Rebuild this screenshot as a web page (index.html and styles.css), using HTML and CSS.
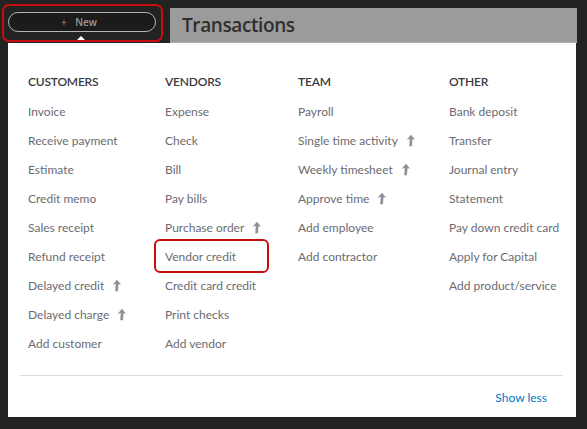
FILE: index.html
```html
<!DOCTYPE html>
<html lang="en">
<head>
    <meta charset="UTF-8">
    <meta name="viewport" content="width=device-width, initial-scale=1.0">
    <title>Transactions</title>
    <link rel="stylesheet" href="styles.css">
</head>
<body>
    <div class="topbar">
        <div class="new-wrap">
            <button class="new-btn"><span class="plus">+</span> New</button>
            <span class="caret"></span>
        </div>
        <div class="page-title">Transactions</div>
    </div>
    <div class="panel">
        <div class="columns">
            <ul class="col">
                <li class="col-title">CUSTOMERS</li>
                <li>Invoice</li>
                <li>Receive payment</li>
                <li>Estimate</li>
                <li>Credit memo</li>
                <li>Sales receipt</li>
                <li>Refund receipt</li>
                <li>Delayed credit <svg class="up" viewBox="0 0 10 14"><path d="M5.5 0.5 L10 6 L7.2 5.6 L6.6 13.5 L3.6 13.5 L4.2 5.4 L0.8 6.2 Z"/></svg></li>
                <li>Delayed charge <svg class="up" viewBox="0 0 10 14"><path d="M5.5 0.5 L10 6 L7.2 5.6 L6.6 13.5 L3.6 13.5 L4.2 5.4 L0.8 6.2 Z"/></svg></li>
                <li>Add customer</li>
            </ul>
            <ul class="col">
                <li class="col-title">VENDORS</li>
                <li>Expense</li>
                <li>Check</li>
                <li>Bill</li>
                <li>Pay bills</li>
                <li>Purchase order <svg class="up" viewBox="0 0 10 14"><path d="M5.5 0.5 L10 6 L7.2 5.6 L6.6 13.5 L3.6 13.5 L4.2 5.4 L0.8 6.2 Z"/></svg></li>
                <li class="marked">Vendor credit</li>
                <li>Credit card credit</li>
                <li>Print checks</li>
                <li>Add vendor</li>
            </ul>
            <ul class="col">
                <li class="col-title">TEAM</li>
                <li>Payroll</li>
                <li>Single time activity <svg class="up" viewBox="0 0 10 14"><path d="M5.5 0.5 L10 6 L7.2 5.6 L6.6 13.5 L3.6 13.5 L4.2 5.4 L0.8 6.2 Z"/></svg></li>
                <li>Weekly timesheet <svg class="up" viewBox="0 0 10 14"><path d="M5.5 0.5 L10 6 L7.2 5.6 L6.6 13.5 L3.6 13.5 L4.2 5.4 L0.8 6.2 Z"/></svg></li>
                <li>Approve time <svg class="up" viewBox="0 0 10 14"><path d="M5.5 0.5 L10 6 L7.2 5.6 L6.6 13.5 L3.6 13.5 L4.2 5.4 L0.8 6.2 Z"/></svg></li>
                <li>Add employee</li>
                <li>Add contractor</li>
            </ul>
            <ul class="col">
                <li class="col-title">OTHER</li>
                <li>Bank deposit</li>
                <li>Transfer</li>
                <li>Journal entry</li>
                <li>Statement</li>
                <li>Pay down credit card</li>
                <li>Apply for Capital</li>
                <li>Add product/service</li>
            </ul>
        </div>
        <div class="panel-footer">
            <a href="#" class="show-less">Show less</a>
        </div>
    </div>
</body>
</html>
```

FILE: styles.css
```css
body {
    margin: 0;
    background-color: #232323;
    font-family: Lato, "Open Sans", sans-serif;
    height: 429px;
    overflow: hidden;
}
.topbar {
    display: flex;
    align-items: flex-start;
    height: 43px;
}
.new-wrap {
    position: relative;
    box-sizing: border-box;
    width: 161px;
    height: 38px;
    margin: 4px 0 0 2px;
    padding: 6px 0 0 4px;
    border: 2px solid #c80f0f;
    border-radius: 7px;
}
.new-btn {
    display: block;
    box-sizing: border-box;
    width: 148px;
    height: 20px;
    padding: 0 6px 0 0;
    background-color: #1b1b1b;
    border: 1.5px solid #b5b5b5;
    border-radius: 10px;
    color: #9a9a9a;
    font-family: "Open Sans", sans-serif;
    font-size: 10px;
    font-weight: 600;
    line-height: 16px;
}
.new-btn .plus {
    font-weight: 400;
    margin-right: 6px;
}
.caret {
    position: absolute;
    left: 73px;
    bottom: 0;
    width: 0;
    height: 0;
    border-left: 4px solid transparent;
    border-right: 4px solid transparent;
    border-bottom: 4px solid #fff;
}
.page-title {
    flex: 1;
    box-sizing: border-box;
    height: 35px;
    margin: 8px 10px 0 7px;
    padding-left: 12px;
    background-color: #9b9b9b;
    border-bottom: 1px solid #b0b0b0;
    color: #2e2e2e;
    font-family: "Open Sans", sans-serif;
    font-size: 19px;
    font-weight: 600;
    letter-spacing: -0.4px;
    line-height: 35px;
}
.panel {
    box-sizing: border-box;
    height: 374px;
    margin: 0 11px 0 8px;
    padding: 24px 13px 0 12px;
    background-color: #fff;
}
.columns {
    display: grid;
    grid-template-columns: 137px 133px 151px 1fr;
    padding-left: 8px;
    border-bottom: 1px solid #dcdcde;
    padding-bottom: 17px;
}
.col {
    list-style: none;
    margin: 0;
    padding: 0;
}
.col li {
    height: 29px;
    line-height: 29px;
    font-size: 12px;
    color: #6b6c72;
    white-space: nowrap;
}
.col li.col-title {
    font-size: 12px;
    font-weight: 600;
    letter-spacing: -0.2px;
    color: #393a3d;
    margin-bottom: 1px;
}
.col li.marked {
    box-sizing: border-box;
    width: 115px;
    height: 34px;
    margin: -3px 0 -2px -11px;
    padding-left: 9px;
    line-height: 31px;
    border: 2px solid #c80f0f;
    border-radius: 6px;
}
.up {
    width: 9px;
    height: 13px;
    margin-left: 5px;
    vertical-align: -2px;
    fill: #8d9096;
}
.panel-footer {
    display: flex;
    justify-content: flex-end;
    padding: 12px 16px 0 0;
}
.show-less {
    color: #0077c5;
    font-size: 12px;
    line-height: 20px;
    text-decoration: none;
}
```
